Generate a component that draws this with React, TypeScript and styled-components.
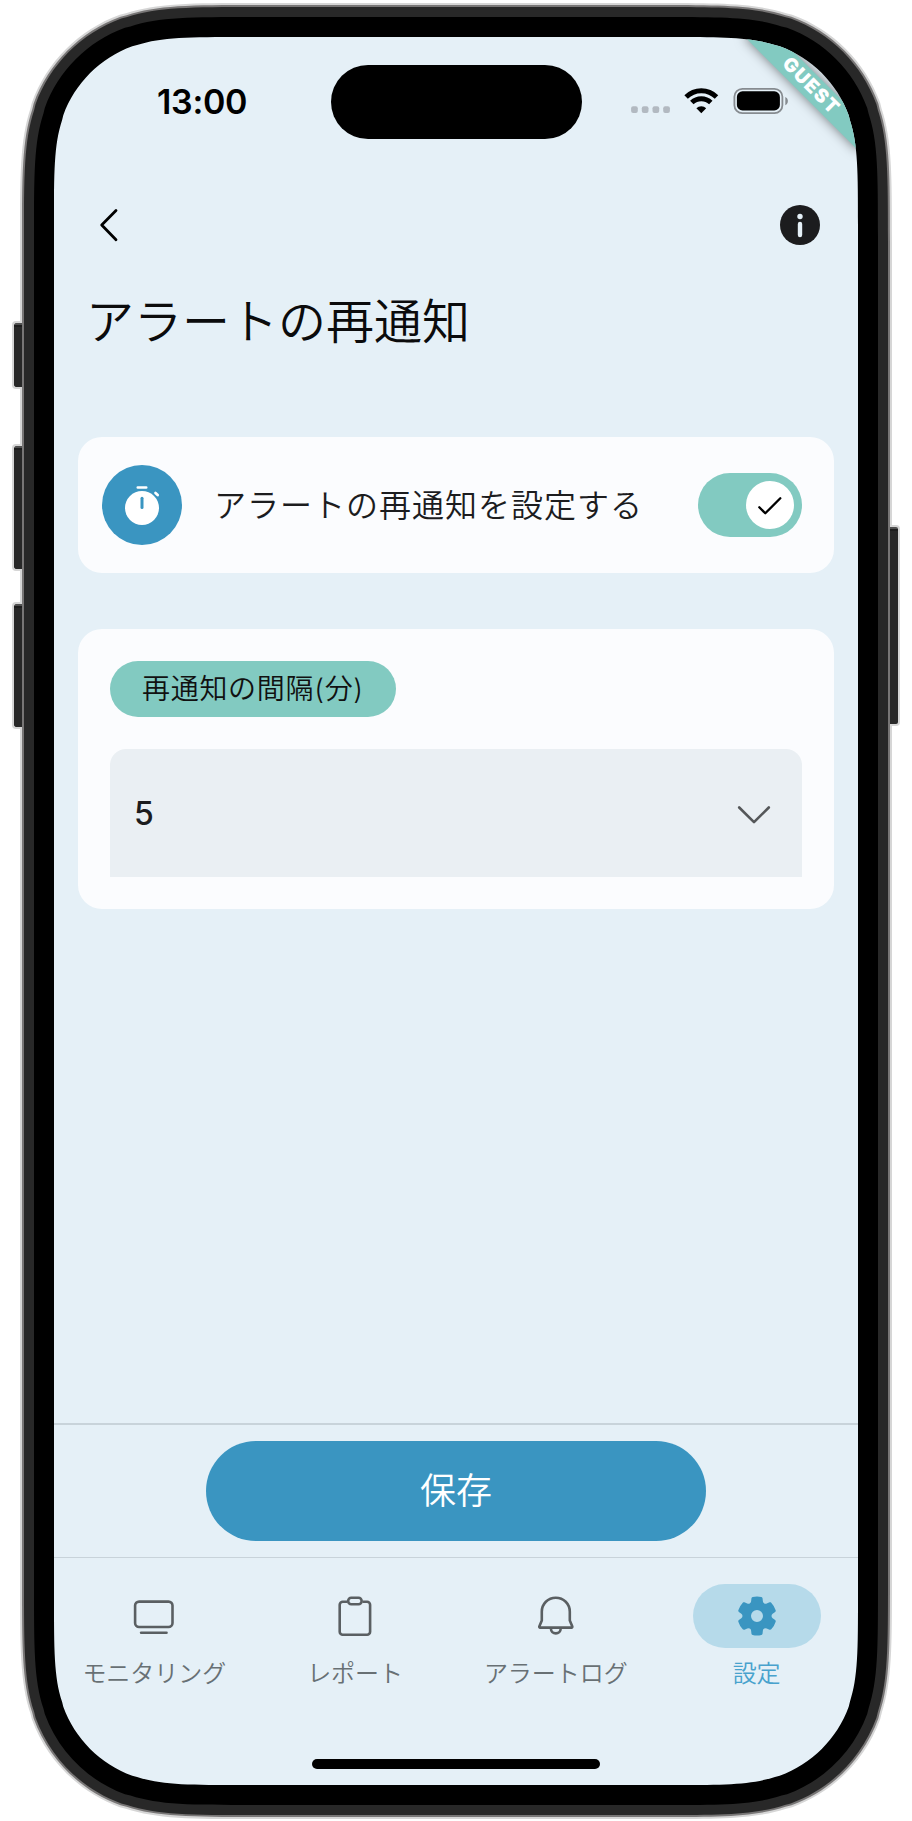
import React from "react";
import styled, { createGlobalStyle } from "styled-components";

const color = {
  screen: "#e5f0f7",
  card: "#fbfcfe",
  field: "#eaeff3",
  blue: "#3a95c1",
  teal: "#82cac1",
  ink: "#1c1c1e",
  muted: "#5a5f62",
  line: "#c8d3da",
};

/* Continuous-curvature rounded rectangle, as used for the phone body. */
const squircle = (w: number, h: number, r: number) => {
  const a = 1.528665 * r;
  const b = 1.08849296 * r;
  const c = 0.86840694 * r;
  const m = 0.66993427 * r;
  const n = 0.065496 * r;
  const d = 0.63149379 * r;
  const e = 0.07491139 * r;
  const f = 0.37282383 * r;
  const g = 0.16905956 * r;
  return (
    `path("M${a} 0H${w - a}C${w - b} 0 ${w - c} 0 ${w - m} ${n}L${w - d} ${e}` +
    `C${w - f} ${g} ${w - g} ${f} ${w - e} ${d}L${w - n} ${m}C${w} ${c} ${w} ${b} ${w} ${a}` +
    `V${h - a}C${w} ${h - b} ${w} ${h - c} ${w - n} ${h - m}L${w - e} ${h - d}` +
    `C${w - g} ${h - f} ${w - f} ${h - g} ${w - d} ${h - e}L${w - m} ${h - n}C${w - c} ${h} ${w - b} ${h} ${w - a} ${h}` +
    `H${a}C${b} ${h} ${c} ${h} ${m} ${h - n}L${d} ${h - e}C${f} ${h - g} ${g} ${h - f} ${e} ${h - d}L${n} ${h - m}` +
    `C0 ${h - c} 0 ${h - b} 0 ${h - a}V${a}C0 ${b} 0 ${c} ${n} ${m}L${e} ${d}` +
    `C${g} ${f} ${f} ${g} ${d} ${e}L${m} ${n}C${c} 0 ${b} 0 ${a} 0Z")`
  );
};

const GlobalStyle = createGlobalStyle`
  * { box-sizing: border-box; }
  body {
    margin: 0;
    background: #fff;
    font-family: Inter, "Noto Sans CJK JP", sans-serif;
    color: ${color.ink};
  }
  button { font: inherit; border: 0; padding: 0; background: none; color: inherit; display: block; }
  svg { display: block; flex: none; }
`;

const Device = styled.div`
  display: flex;
  align-items: flex-start;
  width: 912px;
  height: 1821px;
  padding: 3px 12px 0;
  overflow: hidden;
`;

const Rail = styled.div<{ $top: number }>`
  display: flex;
  flex-direction: column;
  width: 8px;
  padding-top: ${(p) => p.$top}px;
`;

const SideKey = styled.div<{ $height: number; $gap?: number; $right?: boolean }>`
  position: relative;
  z-index: 1;
  flex: none;
  width: 10px;
  height: ${(p) => p.$height}px;
  margin-top: ${(p) => p.$gap ?? 0}px;
  margin-left: ${(p) => (p.$right ? -2 : 0)}px;
  border: 2px solid #d6d6d6;
  border-${(p) => (p.$right ? "left" : "right")}: 0;
  border-radius: ${(p) => (p.$right ? "0 4px 4px 0" : "4px 0 0 4px")};
  background: linear-gradient(#505050 0 2px, #1d1d1d 2px 4px, #282828 4px);
`;

const Shell = styled.div<{ $w: number; $h: number; $r: number; $pad: number; $fill: string }>`
  flex: none;
  width: ${(p) => p.$w}px;
  height: ${(p) => p.$h}px;
  padding: ${(p) => p.$pad}px;
  background: ${(p) => p.$fill};
  clip-path: ${(p) => squircle(p.$w, p.$h, p.$r)};
`;

const Screen = styled.main`
  position: relative;
  display: flex;
  flex-direction: column;
  width: 804px;
  height: 1748px;
  background: ${color.screen};
  clip-path: ${squircle(804, 1748, 124)};
`;

const StatusBar = styled.header`
  display: grid;
  grid-template-columns: 276.5px 251px 276.5px;
  height: 124px;
  padding-top: 28px;
`;

const Clock = styled.div`
  padding: 16px 0 0 103px;
  font-size: 34px;
  line-height: 41px;
  font-weight: 600;
  letter-spacing: -0.3px;
  color: #000;
`;

const Island = styled.div`
  height: 74px;
  border-radius: 37px;
  background: #000;
`;

const StatusIcons = styled.div`
  display: flex;
  align-items: flex-start;
  padding: 22px 0 0 49px;
`;

const Ribbon = styled.div`
  position: absolute;
  top: 0;
  right: -80px;
  width: 160px;
  height: 80px;
  padding-top: 56px;
  transform: rotate(45deg);
  transform-origin: 80px 0;
`;

const RibbonLabel = styled.div`
  height: 24px;
  padding-left: 3px;
  background: ${color.teal};
  box-shadow: 0 0 12px rgba(0, 0, 0, 0.5);
  color: #fff;
  font-size: 19px;
  line-height: 24px;
  font-weight: 900;
  letter-spacing: 1.4px;
  text-align: center;
`;

const NavRow = styled.div`
  display: flex;
  align-items: center;
  justify-content: space-between;
  height: 128px;
  padding: 0 34px 0 30px;
`;

const Title = styled.h1`
  margin: 0;
  padding: 1px 0 0 32px;
  height: 64px;
  font-size: 48px;
  line-height: 64px;
  font-weight: 350;
  color: #0b0b0c;
`;

const Content = styled.section`
  display: flex;
  flex: 1;
  flex-direction: column;
  gap: 56px;
  padding: 84px 24px 0;
`;

const ToggleCard = styled.div`
  display: flex;
  align-items: center;
  height: 136px;
  padding: 0 32px 0 24px;
  border-radius: 24px;
  background: ${color.card};
`;

const RoundIcon = styled.div`
  display: flex;
  align-items: center;
  justify-content: center;
  width: 80px;
  height: 80px;
  border-radius: 50%;
  background: ${color.blue};
`;

const ToggleText = styled.div`
  flex: 1;
  padding: 1px 0 0 32px;
  font-size: 32px;
  line-height: 48px;
  font-weight: 350;
  letter-spacing: 1px;
  white-space: nowrap;
`;

const Switch = styled.button`
  display: flex;
  align-items: center;
  justify-content: flex-end;
  width: 104px;
  height: 64px;
  padding-right: 8px;
  border-radius: 32px;
  background: ${color.teal};
`;

const Thumb = styled.span`
  display: flex;
  align-items: center;
  justify-content: center;
  width: 48px;
  height: 48px;
  border-radius: 50%;
  background: #fff;
`;

const IntervalCard = styled.div`
  display: flex;
  flex-direction: column;
  align-items: flex-start;
  gap: 32px;
  height: 280px;
  padding: 32px;
  border-radius: 24px;
  background: ${color.card};
`;

const Chip = styled.div`
  width: 286px;
  height: 56px;
  padding-left: 32px;
  border-radius: 28px;
  background: ${color.teal};
  color: #111;
  font-size: 28px;
  line-height: 56px;
  font-weight: 350;
  letter-spacing: 0.7px;
  white-space: nowrap;
`;

const Select = styled.button`
  display: flex;
  align-items: center;
  justify-content: space-between;
  width: 692px;
  height: 128px;
  padding: 1px 24px 0;
  border-radius: 16px 16px 0 0;
  background: ${color.field};
  font-size: 32px;
  font-weight: 500;
`;

const SaveBar = styled.div`
  display: flex;
  justify-content: center;
  height: 134px;
  padding-top: 16px;
  border-top: 2px solid ${color.line};
`;

const SaveButton = styled.button`
  width: 500px;
  height: 100px;
  padding-top: 1px;
  border-radius: 50px;
  background: ${color.blue};
  color: #fff;
  font-size: 36px;
  line-height: 99px;
  font-weight: 350;
  text-align: center;
`;

const TabBar = styled.nav`
  display: grid;
  grid-template-columns: repeat(4, 1fr);
  height: 160px;
  padding: 26px 1px 0 0;
  border-top: 1px solid ${color.line};
`;

const Tab = styled.div<{ $active?: boolean }>`
  display: flex;
  flex-direction: column;
  align-items: center;
  color: ${(p) => (p.$active ? "#48a2cd" : "#687074")};
`;

const TabIcon = styled.div<{ $active?: boolean }>`
  display: flex;
  align-items: center;
  justify-content: center;
  width: 128px;
  height: 64px;
  border-radius: 32px;
  background: ${(p) => (p.$active ? "#b6daea" : "transparent")};
  color: ${(p) => (p.$active ? color.blue : color.muted)};
`;

const TabLabel = styled.div`
  padding-top: 10px;
  font-size: 24px;
  line-height: 32px;
  font-weight: 350;
  white-space: nowrap;
`;

const HomeArea = styled.div`
  display: flex;
  justify-content: center;
  height: 68px;
  padding-top: 42px;
`;

const HomeIndicator = styled.div`
  width: 288px;
  height: 10px;
  border-radius: 5px;
  background: #000;
`;

const StatusGlyphs = () => (
  <svg width="160" height="30" viewBox="0 0 160 30">
    {[0, 10.7, 21.4, 32.1].map((x) => (
      <rect key={x} x={x + 0.1} y="19.2" width="6.7" height="6.8" rx="2" fill="#b2b9c1" />
    ))}
    <g fill="none" stroke="#000" strokeWidth="4.9">
      <path d="M55.1 10.1A21.5 21.5 0 0 1 85.5 10.1" />
      <path d="M60.8 15.6A13.6 13.6 0 0 1 79.8 15.6" />
    </g>
    <path d="M70.3 26.2L65.4 21.3A7 7 0 0 1 75.2 21.3Z" fill="#000" />
    <rect x="103.4" y="1.8" width="48" height="24.4" rx="8" fill="none" stroke="#868b90" strokeWidth="1.8" />
    <rect x="105.9" y="4.3" width="43" height="19.2" rx="5.6" fill="#000" />
    <path d="M154.3 10c3.4 1.2 3.4 7 0 8.2z" fill="#868b90" />
  </svg>
);

const BackIcon = () => (
  <svg width="48" height="48" viewBox="0 0 48 48" fill="none" stroke="#000" strokeWidth="2.8" strokeLinecap="round" strokeLinejoin="round">
    <path d="M32 9.500L17.700 24L32 38.700" />
  </svg>
);

const InfoIcon = () => (
  <svg width="48" height="48" viewBox="0 0 48 48">
    <circle cx="24" cy="24" r="20" fill={color.ink} />
    <circle cx="24" cy="15.5" r="2.7" fill={color.screen} />
    <path d="M24 23v11" stroke={color.screen} strokeWidth="4.4" strokeLinecap="round" />
  </svg>
);

const TimerIcon = () => (
  <svg width="48" height="48" viewBox="0 0 48 48" fill="none" strokeLinecap="round">
    <circle cx="24" cy="27" r="17" fill="#fff" />
    <path d="M19.8 6.500h8.400M37.500 12l2.200 2" stroke="#fff" strokeWidth="2.7" />
    <path d="M24 17.2v9.400" stroke={color.blue} strokeWidth="3" />
  </svg>
);

const CheckIcon = () => (
  <svg width="32" height="32" viewBox="0 0 32 32" fill="none" stroke="#000" strokeWidth="2.3" strokeLinecap="round" strokeLinejoin="round">
    <path d="M5.300 18.300L11.300 24.300L26.300 9.300" />
  </svg>
);

const ChevronIcon = () => (
  <svg width="48" height="48" viewBox="0 0 48 48" fill="none" stroke="#555759" strokeWidth="2.6" strokeLinecap="round" strokeLinejoin="round">
    <path d="M9.200 17.500L24 32.100L38.800 17.500" />
  </svg>
);

const MonitorIcon = () => (
  <svg width="48" height="48" viewBox="0 0 48 48" fill="none" stroke="currentColor" strokeWidth="2.6" strokeLinecap="round">
    <rect x="5.1" y="9.6" width="37.400" height="25.400" rx="4" />
    <path d="M11.100 40.800h25.400" />
  </svg>
);

const ClipboardIcon = () => (
  <svg width="48" height="48" viewBox="0 0 48 48" fill="none" stroke="currentColor" strokeWidth="2.6" strokeLinejoin="round">
    <path d="M16.500 9.800H11.700a3 3 0 0 0-3 3V39.700a3 3 0 0 0 3 3h24.400a3 3 0 0 0 3-3V12.800a3 3 0 0 0-3-3h-4.600" />
    <rect x="17.200" y="5.700" width="13.400" height="6.600" rx="3" />
  </svg>
);

const BellIcon = () => (
  <svg width="48" height="48" viewBox="0 0 48 48" fill="none" stroke="currentColor" strokeWidth="2.6" strokeLinejoin="round" strokeLinecap="round">
    <path d="M23.800 5.700c-7.800 0-14 6.200-14 14V28.500L7.300 34.500a.8.8 0 0 0 .8 1.100h31.400a.8.8 0 0 0 .8-1.100L37.800 28.500V19.700c0-7.800-6.200-14-14-14z" />
    <path d="M18.900 36.500a4.900 4.900 0 0 0 9.800 0" />
  </svg>
);

const GearIcon = () => (
  <svg width="48" height="48" viewBox="0 0 48 48" fill="currentColor">
    <path
      fillRule="evenodd"
      d="M24.020 4.500c1.470.020 2.930.190 4.360.5.620.140 1.090.660 1.160 1.300l.340 3.050a2.770 2.770 0 0 0 3.870 2.240l2.790-1.230c.590-.260 1.270-.120 1.710.350a19.490 19.490 0 0 1 4.420 7.600c.190.610-.030 1.260-.540 1.640l-2.480 1.830a2.750 2.750 0 0 0 0 4.440l2.480 1.830c.510.370.730 1.030.540 1.630a19.500 19.500 0 0 1-4.420 7.610c-.440.460-1.120.600-1.710.340l-2.800-1.230a2.760 2.760 0 0 0-3.860 2.220l-.340 3.050c-.070.630-.520 1.150-1.140 1.300a18.940 18.940 0 0 1-8.800 0 1.500 1.500 0 0 1-1.140-1.300l-.340-3.040a2.760 2.760 0 0 0-3.860-2.210l-2.800 1.220c-.580.260-1.270.130-1.710-.340a19.500 19.500 0 0 1-4.420-7.610c-.190-.610.030-1.270.540-1.640l2.480-1.830a2.750 2.750 0 0 0 0-4.440l-2.480-1.820a1.500 1.500 0 0 1-.540-1.640 19.490 19.490 0 0 1 4.420-7.600c.440-.470 1.120-.610 1.710-.350l2.790 1.230a2.780 2.780 0 0 0 3.870-2.250l.340-3.040c.070-.650.540-1.170 1.170-1.310 1.430-.310 2.890-.480 4.390-.500zM24 18a6 6 0 1 0 0 12 6 6 0 0 0 0-12z"
    />
  </svg>
);

const tabs = [
  { label: "モニタリング", icon: <MonitorIcon /> },
  { label: "レポート", icon: <ClipboardIcon /> },
  { label: "アラートログ", icon: <BellIcon /> },
  { label: "設定", icon: <GearIcon />, active: true },
];

export default function App() {
  return (
    <Device lang="ja">
      <GlobalStyle />
      <Rail $top={318}>
        <SideKey $height={68} />
        <SideKey $height={127} $gap={55} />
        <SideKey $height={127} $gap={31} />
      </Rail>
      <Shell $w={872} $h={1816} $r={158} $pad={2} $fill="#d6d6d6">
        <Shell $w={868} $h={1812} $r={156} $pad={2} $fill="#787676">
          <Shell $w={864} $h={1808} $r={154} $pad={10} $fill="#282828">
            <Shell $w={844} $h={1788} $r={144} $pad={20} $fill="#000">
              <Screen>
                <StatusBar>
                  <Clock>13:00</Clock>
                  <Island />
                  <StatusIcons>
                    <StatusGlyphs />
                  </StatusIcons>
                </StatusBar>
                <NavRow>
                  <button aria-label="戻る"><BackIcon /></button>
                  <button aria-label="情報"><InfoIcon /></button>
                </NavRow>
                <Title>アラートの再通知</Title>
                <Content>
                  <ToggleCard>
                    <RoundIcon><TimerIcon /></RoundIcon>
                    <ToggleText>アラートの再通知を設定する</ToggleText>
                    <Switch role="switch" aria-checked="true">
                      <Thumb><CheckIcon /></Thumb>
                    </Switch>
                  </ToggleCard>
                  <IntervalCard>
                    <Chip>再通知の間隔(分)</Chip>
                    <Select>
                      <span>5</span>
                      <ChevronIcon />
                    </Select>
                  </IntervalCard>
                </Content>
                <SaveBar>
                  <SaveButton>保存</SaveButton>
                </SaveBar>
                <TabBar>
                  {tabs.map((t) => (
                    <Tab key={t.label} $active={t.active}>
                      <TabIcon $active={t.active}>{t.icon}</TabIcon>
                      <TabLabel>{t.label}</TabLabel>
                    </Tab>
                  ))}
                </TabBar>
                <HomeArea>
                  <HomeIndicator />
                </HomeArea>
                <Ribbon>
                  <RibbonLabel>GUEST</RibbonLabel>
                </Ribbon>
              </Screen>
            </Shell>
          </Shell>
        </Shell>
      </Shell>
      <Rail $top={522}>
        <SideKey $height={201} $right />
      </Rail>
    </Device>
  );
}
